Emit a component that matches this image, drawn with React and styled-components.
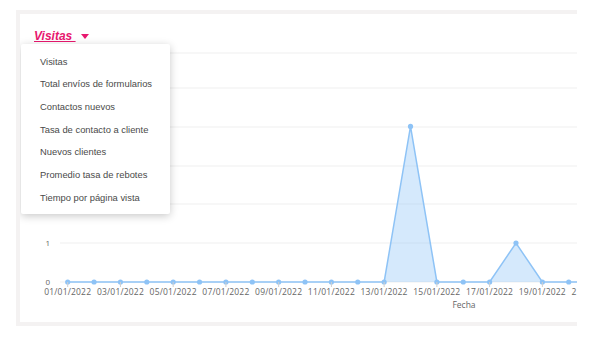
import React from 'react';
import styled, { createGlobalStyle } from 'styled-components';

const GlobalStyle = createGlobalStyle`
    body {
        margin: 0;
        background: #ffffff;
        font-family: "Liberation Sans", Arial, sans-serif;
    }
`;

const Page = styled.div`
    padding: 10px 0 0 16px;
`;

const Card = styled.div`
    width: 557px;
    border: 4px solid #f4f2f2;
    border-right: none;
    background: #fff;
    overflow: hidden;
`;

const Header = styled.div`
    position: relative;
    height: 34px;
    padding: 12px 0 0 14px;
    box-sizing: border-box;
`;

const Title = styled.a`
    display: inline-flex;
    align-items: center;
    color: #e8186f;
    font-size: 12px;
    font-weight: bold;
    font-style: italic;
    line-height: 14px;
    text-decoration: underline;
    cursor: pointer;
    .caret {
        margin-left: 5px;
        width: 0;
        height: 0;
        border-left: 4px solid transparent;
        border-right: 4px solid transparent;
        border-top: 5px solid #e8186f;
    }
`;

const Menu = styled.ul`
    position: absolute;
    left: 1px;
    top: 30px;
    width: 149px;
    margin: 0;
    padding: 6px 0 5px;
    list-style: none;
    background: #fff;
    border-radius: 2px;
    box-shadow: 0 2px 8px rgba(0, 0, 0, 0.22);
    z-index: 2;
`;

const MenuItem = styled.li`
    height: 22.67px;
    display: flex;
    align-items: center;
    padding-left: 19px;
    font-size: 9.4px;
    color: #4a4a4a;
    white-space: nowrap;
`;

const Chart = styled.svg`
    display: block;
    font-family: "Open Sans", sans-serif;
`;

const options = [
    'Visitas',
    'Total envíos de formularios',
    'Contactos nuevos',
    'Tasa de contacto a cliente',
    'Nuevos clientes',
    'Promedio tasa de rebotes',
    'Tiempo por página vista',
];

const values = [0, 0, 0, 0, 0, 0, 0, 0, 0, 0, 0, 0, 0, 4, 0, 0, 0, 1, 0, 0, 0];
const x0 = 47.7;
const step = 26.37;
const yZero = 234;
const unit = 38.9;
const grid = [5, 40, 79, 118, 156, 195, 234];

const px = (i) => x0 + step * i;
const py = (v) => yZero - v * unit;

function LineChart() {
    const pts = values.map((v, i) => `${px(i)},${py(v)}`).join(' ');
    const area = `${px(0)},${yZero} ${pts} ${px(values.length - 1)},${yZero}`;
    return (
        <Chart width="600" height="274">
            {grid.map((y) => (
                <line key={y} x1="40" x2="600" y1={y} y2={y} stroke="#efefef" strokeWidth="1" />
            ))}
            {/* labels 2..5 sit under the open menu */}
            {[0, 1].map((v) => (
                <text key={v} x="30" y={py(v) + 3} fontSize="8" fill="#666" textAnchor="end">{v}</text>
            ))}
            <polygon points={area} fill="rgba(144, 198, 248, 0.38)" />
            <polyline points={pts} fill="none" stroke="#8ec3f6" strokeWidth="1.5" />
            {values.map((v, i) => (
                <circle key={i} cx={px(i)} cy={py(v)} r="2.6" fill="#8ec3f6" />
            ))}
            {values.map((v, i) => i % 2 === 0 && (
                <g key={i}>
                    <line x1={px(i)} x2={px(i)} y1={yZero} y2={yZero + 5} stroke="#cfcfcf" />
                    <text x={px(i)} y="247" fontSize="8.5" fill="#666" textAnchor="middle" letterSpacing="0.2">
                        {String(i + 1).padStart(2, '0')}/01/2022
                    </text>
                </g>
            ))}
            <text x="444" y="260" fontSize="8.5" fill="#666" textAnchor="middle">Fecha</text>
        </Chart>
    );
}

function App() {
    return (
        <Page>
            <GlobalStyle />
            <Card>
                <Header>
                    <Title>Visitas&nbsp;<span className="caret" /></Title>
                    <Menu>
                        {options.map((o) => (
                            <MenuItem key={o}>{o}</MenuItem>
                        ))}
                    </Menu>
                </Header>
                <LineChart />
            </Card>
        </Page>
    );
}

export default App;
